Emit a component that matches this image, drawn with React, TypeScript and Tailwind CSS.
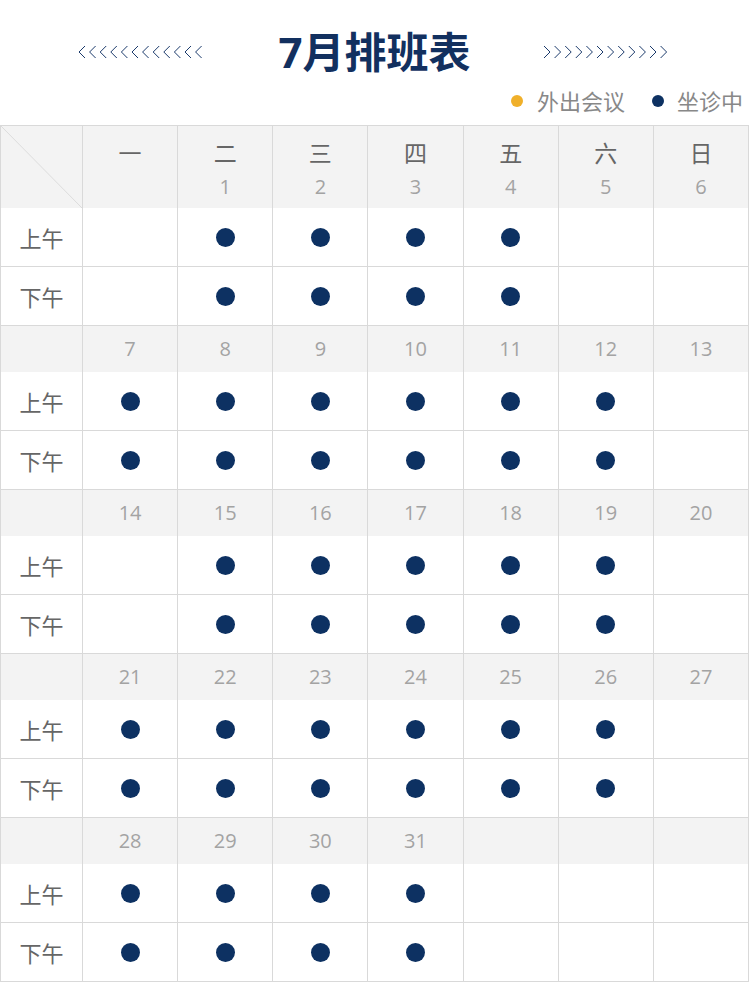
import React from 'react';

const weekdays = ['一', '二', '三', '四', '五', '六', '日'];

const weeks: { days: (number | null)[]; am: number[]; pm: number[] }[] = [
  { days: [null, 1, 2, 3, 4, 5, 6], am: [1, 2, 3, 4], pm: [1, 2, 3, 4] },
  { days: [7, 8, 9, 10, 11, 12, 13], am: [0, 1, 2, 3, 4, 5], pm: [0, 1, 2, 3, 4, 5] },
  { days: [14, 15, 16, 17, 18, 19, 20], am: [1, 2, 3, 4, 5], pm: [1, 2, 3, 4, 5] },
  { days: [21, 22, 23, 24, 25, 26, 27], am: [0, 1, 2, 3, 4, 5], pm: [0, 1, 2, 3, 4, 5] },
  { days: [28, 29, 30, 31, null, null, null], am: [0, 1, 2, 3], pm: [0, 1, 2, 3] },
];

function Chevrons({ dir }: { dir: 'left' | 'right' }) {
  return (
    <svg width="128" height="16" viewBox="0 0 128 16" fill="none">
      {Array.from({ length: 12 }).map((_, i) => {
        const x = 1 + i * 10.6;
        const pts =
          dir === 'left'
            ? `${x + 6},2 ${x},8 ${x + 6},14`
            : `${x},2 ${x + 6},8 ${x},14`;
        return <polyline key={i} points={pts} stroke="#1b3a6b" strokeWidth="1" />;
      })}
    </svg>
  );
}

function Dot() {
  return <span className="block w-[19px] h-[19px] rounded-full bg-[#0d3162]" />;
}

function SessionRow({ label, marks }: { label: string; marks: number[] }) {
  return (
    <>
      <div className="h-[59px] border-r border-b border-[#d9d9d9] bg-white flex items-center justify-center pt-[2px] text-[22px] text-[#666]">
        {label}
      </div>
      {weekdays.map((_, i) => (
        <div
          key={i}
          className="h-[59px] border-r border-b border-[#d9d9d9] bg-white flex items-center justify-center pt-[1px]"
        >
          {marks.includes(i) && <Dot />}
        </div>
      ))}
    </>
  );
}

export default function App() {
  return (
    <div
      className="w-[749px] bg-white"
      style={{ fontFamily: '"Open Sans", "Noto Sans CJK SC", sans-serif' }}
    >
      {/* Title */}
      <div className="h-[86px] flex items-center justify-center gap-[72px] pt-[17px]">
        <Chevrons dir="left" />
        <h1 className="text-[42px] font-bold text-[#12305f] leading-none">7月排班表</h1>
        <Chevrons dir="right" />
      </div>

      {/* Legend */}
      <div className="h-[39px] flex items-start justify-end pr-[6px] pt-[4px] text-[22px] text-[#888] leading-none">
        <div className="flex items-center gap-[14px]">
          <span className="w-[12px] h-[12px] rounded-full bg-[#f0b02a]" />
          <span>外出会议</span>
        </div>
        <div className="flex items-center gap-[13px] ml-[27px]">
          <span className="w-[12px] h-[12px] rounded-full bg-[#0d3162]" />
          <span>坐诊中</span>
        </div>
      </div>

      {/* Schedule grid */}
      <div className="grid grid-cols-[82px_repeat(7,1fr)] border-l border-t border-[#d9d9d9]">
        {weeks.map((w, wi) => (
          <React.Fragment key={wi}>
            {wi === 0 ? (
              <>
                <div className="relative h-[82px] border-r border-[#d9d9d9] bg-[#f3f3f3]">
                  <svg className="absolute inset-0" width="100%" height="100%" viewBox="0 0 81 82" preserveAspectRatio="none">
                    <line x1="0" y1="0" x2="81" y2="82" stroke="#dcdcdc" strokeWidth="1" />
                  </svg>
                </div>
                {weekdays.map((d, i) => (
                  <div
                    key={i}
                    className="h-[82px] border-r border-[#d9d9d9] bg-[#f3f3f3] flex flex-col items-center pt-[12px]"
                  >
                    <span className="text-[23px] leading-[30px] text-[#666]">{d}</span>
                    <span className="text-[20px] leading-[30px] text-[#a3a3a3] mt-[4px]">
                      {w.days[i] ?? ''}
                    </span>
                  </div>
                ))}
              </>
            ) : (
              <>
                <div className="h-[46px] border-r border-[#d9d9d9] bg-[#f3f3f3]" />
                {w.days.map((d, i) => (
                  <div
                    key={i}
                    className="h-[46px] border-r border-[#d9d9d9] bg-[#f3f3f3] flex items-center justify-center text-[20px] text-[#a3a3a3]"
                  >
                    {d ?? ''}
                  </div>
                ))}
              </>
            )}
            <SessionRow label="上午" marks={w.am} />
            <SessionRow label="下午" marks={w.pm} />
          </React.Fragment>
        ))}
      </div>
    </div>
  );
}
